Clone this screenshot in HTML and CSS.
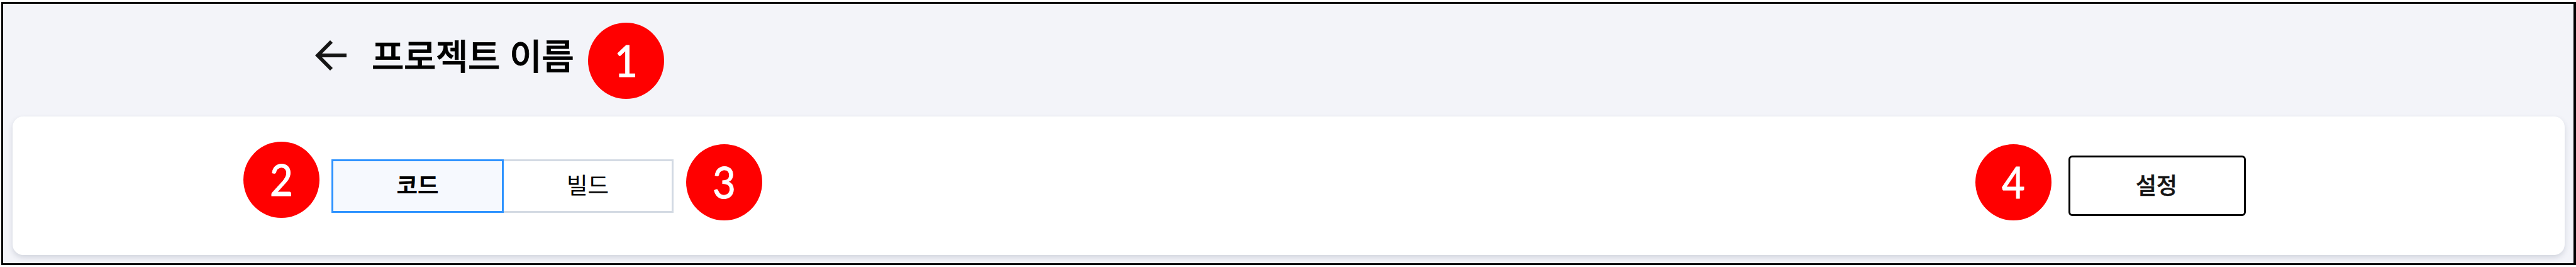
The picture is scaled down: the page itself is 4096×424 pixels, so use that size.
FILE: index.html
```html
<!DOCTYPE html>
<html lang="ko">
<head>
<meta charset="utf-8">
<title>프로젝트 이름</title>
<link rel="stylesheet" href="styles.css">
</head>
<body>
<main class="frame">
  <header class="header">
    <svg class="back" viewBox="0 0 50 48" fill="none" stroke="#151515" stroke-width="5.8"><path d="M26 2 4 24l22 22M4 24h46"/></svg>
    <h1 class="title">프로젝트 이름</h1>
    <span class="marker marker-title"><span class="digit">1</span></span>
  </header>
  <section class="panel">
    <span class="marker marker-code"><span class="digit">2</span></span>
    <div class="tabs">
      <button class="tab tab-active">코드</button>
      <button class="tab tab-build">빌드</button>
    </div>
    <span class="marker marker-build"><span class="digit">3</span></span>
    <span class="marker marker-settings"><span class="digit">4</span></span>
    <button class="settings">설정</button>
  </section>
</main>
</body>
</html>
```
FILE: styles.css
```css
* { box-sizing: border-box; }
body {
  margin: 0;
  height: 424px;
  padding: 3px 0 3px 2px;
  background: #fff;
  font-family: "Noto Sans CJK KR", sans-serif;
  overflow: hidden;
}
.frame {
  height: 418px;
  border: 3px solid #000;
  border-right-width: 4px;
  background: #f3f4f9;
  padding: 0 14px 0 15px;
}
.header {
  height: 179px;
  display: flex;
  align-items: flex-start;
  padding-left: 481px;
}
.back { width: 50px; height: 48px; margin-top: 58px; }
.title {
  margin: 40px 0 0 40px;
  width: 324px;
  font-size: 56px;
  line-height: 80px;
  font-weight: 500;
  letter-spacing: -0.5px;
  color: #000;
  -webkit-text-stroke: 0.8px #000;
  white-space: nowrap;
}
.marker {
  width: 121px;
  height: 121px;
  flex: none;
  border-radius: 50%;
  background: #f00;
  color: #fff;
  font: 400 69px/119px Lato, sans-serif;
  text-align: center;
}
.digit {
  display: block;
  transform: scaleX(0.92);
  -webkit-text-stroke: 1px #fff;
}
.marker-title { margin: 30px 0 0 20px; }
.panel {
  height: 220px;
  border-radius: 17px;
  background: #fff;
  box-shadow: 0 4px 8px rgba(40, 50, 80, 0.16);
  display: flex;
  align-items: flex-start;
  padding-left: 367px;
}
.marker-code { margin-top: 40px; }
.tabs { display: flex; margin: 68px 0 0 19px; }
.tab {
  height: 85px;
  padding: 0 0 6px;
  border: 3px solid #d3dae3;
  background: #fff;
  color: #000;
  font: 400 36.5px/72px "Noto Sans CJK KR", sans-serif;
}
.tab-active {
  width: 274px;
  border-color: #2e93ff;
  background: #f6f9fe;
  font-weight: 700;
}
.tab-build { width: 270px; border-left: 0; }
.marker-build { margin: 44px 0 0 20px; }
.marker-settings { margin: 44px 0 0 auto; }
.settings {
  width: 282px;
  height: 96px;
  margin: 62px 507px 0 27px;
  padding: 0 2px 7px 0;
  border: 3px solid #000;
  border-radius: 6px;
  background: #fff;
  color: #151515;
  font: 500 35.8px/82px "Noto Sans CJK KR", sans-serif;
  -webkit-text-stroke: 0.5px #151515;
}
```
